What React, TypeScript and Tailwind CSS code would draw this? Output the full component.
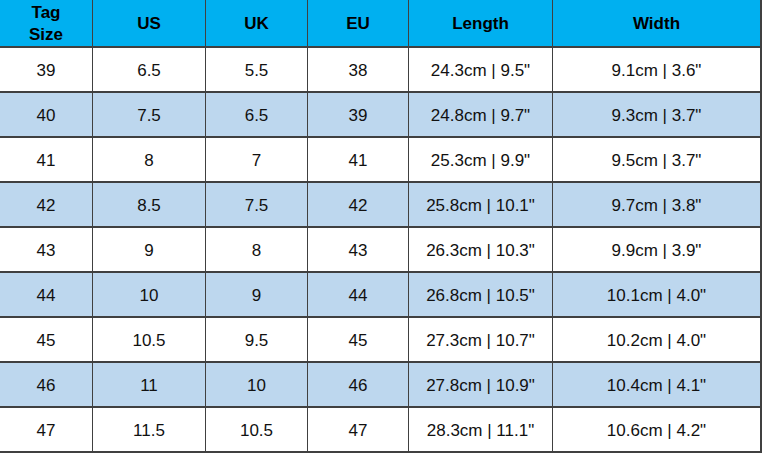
import React from 'react';

const widths = ['w-[93px]', 'w-[113px]', 'w-[102px]', 'w-[101px]', 'w-[144px]', 'w-[209px]'];

const headers = ['Tag\nSize', 'US', 'UK', 'EU', 'Length', 'Width'];

const rows = [
  ['39', '6.5', '5.5', '38', '24.3cm | 9.5"', '9.1cm | 3.6"'],
  ['40', '7.5', '6.5', '39', '24.8cm | 9.7"', '9.3cm | 3.7"'],
  ['41', '8', '7', '41', '25.3cm | 9.9"', '9.5cm | 3.7"'],
  ['42', '8.5', '7.5', '42', '25.8cm | 10.1"', '9.7cm | 3.8"'],
  ['43', '9', '8', '43', '26.3cm | 10.3"', '9.9cm | 3.9"'],
  ['44', '10', '9', '44', '26.8cm | 10.5"', '10.1cm | 4.0"'],
  ['45', '10.5', '9.5', '45', '27.3cm | 10.7"', '10.2cm | 4.0"'],
  ['46', '11', '10', '46', '27.8cm | 10.9"', '10.4cm | 4.1"'],
  ['47', '11.5', '10.5', '47', '28.3cm | 11.1"', '10.6cm | 4.2"'],
];

export default function App() {
  return (
    <div className="w-[762px] h-[453px] bg-white font-['Liberation_Sans',Arial,sans-serif] text-[17px] text-[#111]">
      {/* header */}
      <div className="flex h-[48px] bg-[#00b0f0] border-b-2 border-[#404040]">
        {headers.map((h, i) => (
          <div
            key={i}
            className={`${widths[i]} flex items-center justify-center pt-[2px] text-center font-bold text-black whitespace-pre-line leading-[22px] border-[#404040] ${i === 5 ? 'border-r-2' : 'border-r'}`}
          >
            {h}
          </div>
        ))}
      </div>

      {/* body */}
      {rows.map((r, ri) => (
        <div
          key={ri}
          className={`flex h-[45px] border-b-2 border-[#404040] ${ri % 2 === 1 ? 'bg-[#bdd7ee]' : 'bg-white'}`}
        >
          {r.map((c, ci) => (
            <div
              key={ci}
              className={`${widths[ci]} flex items-center justify-center pt-[2px] border-[#404040] ${ci === 5 ? 'border-r-2' : 'border-r'}`}
            >
              {c}
            </div>
          ))}
        </div>
      ))}
    </div>
  );
}
